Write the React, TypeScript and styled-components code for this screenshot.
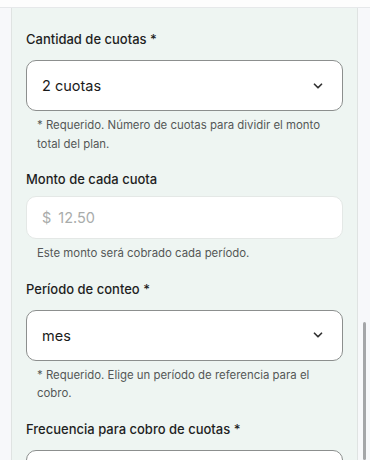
import styled, { createGlobalStyle } from "styled-components";

const Global = createGlobalStyle`
  html, body {
    margin: 0;
    padding: 0;
    background: #f7f8fa;
    font-family: Inter, "Noto Sans", sans-serif;
    overflow: hidden;
  }
`;

function Chevron() {
  return (
    <svg width="14" height="14" viewBox="0 0 24 24" fill="none" stroke="#333" strokeWidth="3" strokeLinecap="round" strokeLinejoin="round">
      <path d="M6 9l6 6 6-6" />
    </svg>
  );
}

type FieldProps = {
  label: string;
  value: string;
  help: string;
  kind?: "select" | "money";
};

function Field({ label, value, help, kind = "select" }: FieldProps) {
  return (
    <FieldWrap>
      <Label>{label}</Label>
      {kind === "select" ? (
        <Select>
          <span>{value}</span>
          <Chevron />
        </Select>
      ) : (
        <Money>
          <span>$</span>
          <span>{value}</span>
        </Money>
      )}
      {help && <Help>{help}</Help>}
    </FieldWrap>
  );
}

export default function App() {
  return (
    <>
      <Global />
      <Page>
        <TopBar />
        <Body>
          <Panel>
            <Field
              label="Cantidad de cuotas *"
              value="2 cuotas"
              help="* Requerido. Número de cuotas para dividir el monto total del plan."
            />
            <Field
              label="Monto de cada cuota"
              value="12.50"
              kind="money"
              help="Este monto será cobrado cada período."
            />
            <Field
              label="Período de conteo *"
              value="mes"
              help="* Requerido. Elige un período de referencia para el cobro."
            />
            <Field label="Frecuencia para cobro de cuotas *" value="" help="" />
          </Panel>
          <Scroll>
            <Thumb />
          </Scroll>
        </Body>
      </Page>
    </>
  );
}

const Page = styled.div`
  width: 370px;
  height: 460px;
  display: flex;
  flex-direction: column;
  overflow: hidden;
`;

const TopBar = styled.div`
  height: 7px;
  flex-shrink: 0;
  background: #fdfdfd;
  border-bottom: 1px solid #e6e8ea;
`;

const Body = styled.div`
  flex: 1;
  display: flex;
  padding-left: 11px;
  min-height: 0;
`;

const Panel = styled.div`
  width: 347px;
  box-sizing: border-box;
  background: #eef5f2;
  border-left: 1px solid #dfe3e2;
  border-right: 1px solid #dfe3e2;
  padding: 21px 14px 0 14px;
  display: flex;
  flex-direction: column;
  gap: 16px;
`;

const FieldWrap = styled.div`
  display: flex;
  flex-direction: column;
`;

const Label = styled.div`
  font-size: 13px;
  line-height: 20px;
  font-weight: 500;
  color: #1e1f1f;
  margin-bottom: 11px;
`;

const Select = styled.div`
  height: 51px;
  box-sizing: border-box;
  border: 1px solid #8c8f8e;
  border-radius: 10px;
  background: #fff;
  padding: 0 17px 0 15px;
  display: flex;
  align-items: center;
  justify-content: space-between;
  font-size: 14.5px;
  color: #1a1a1a;
`;

const Money = styled.div`
  height: 43px;
  box-sizing: border-box;
  margin-top: -4px;
  border: 1px solid #e4e8e6;
  border-radius: 10px;
  background: #fff;
  padding: 0 15px;
  display: flex;
  align-items: center;
  gap: 7px;
  font-size: 14.5px;
  color: #a9acab;
`;

const Help = styled.div`
  margin-top: 5px;
  padding-left: 11px;
  font-size: 11.4px;
  line-height: 18.5px;
  color: #555857;
`;

const Scroll = styled.div`
  flex: 1;
  position: relative;
`;

const Thumb = styled.div`
  position: absolute;
  left: 5px;
  top: 314px;
  bottom: 0;
  width: 3px;
  border-radius: 2px;
  background: #a4a6a8;
`;
